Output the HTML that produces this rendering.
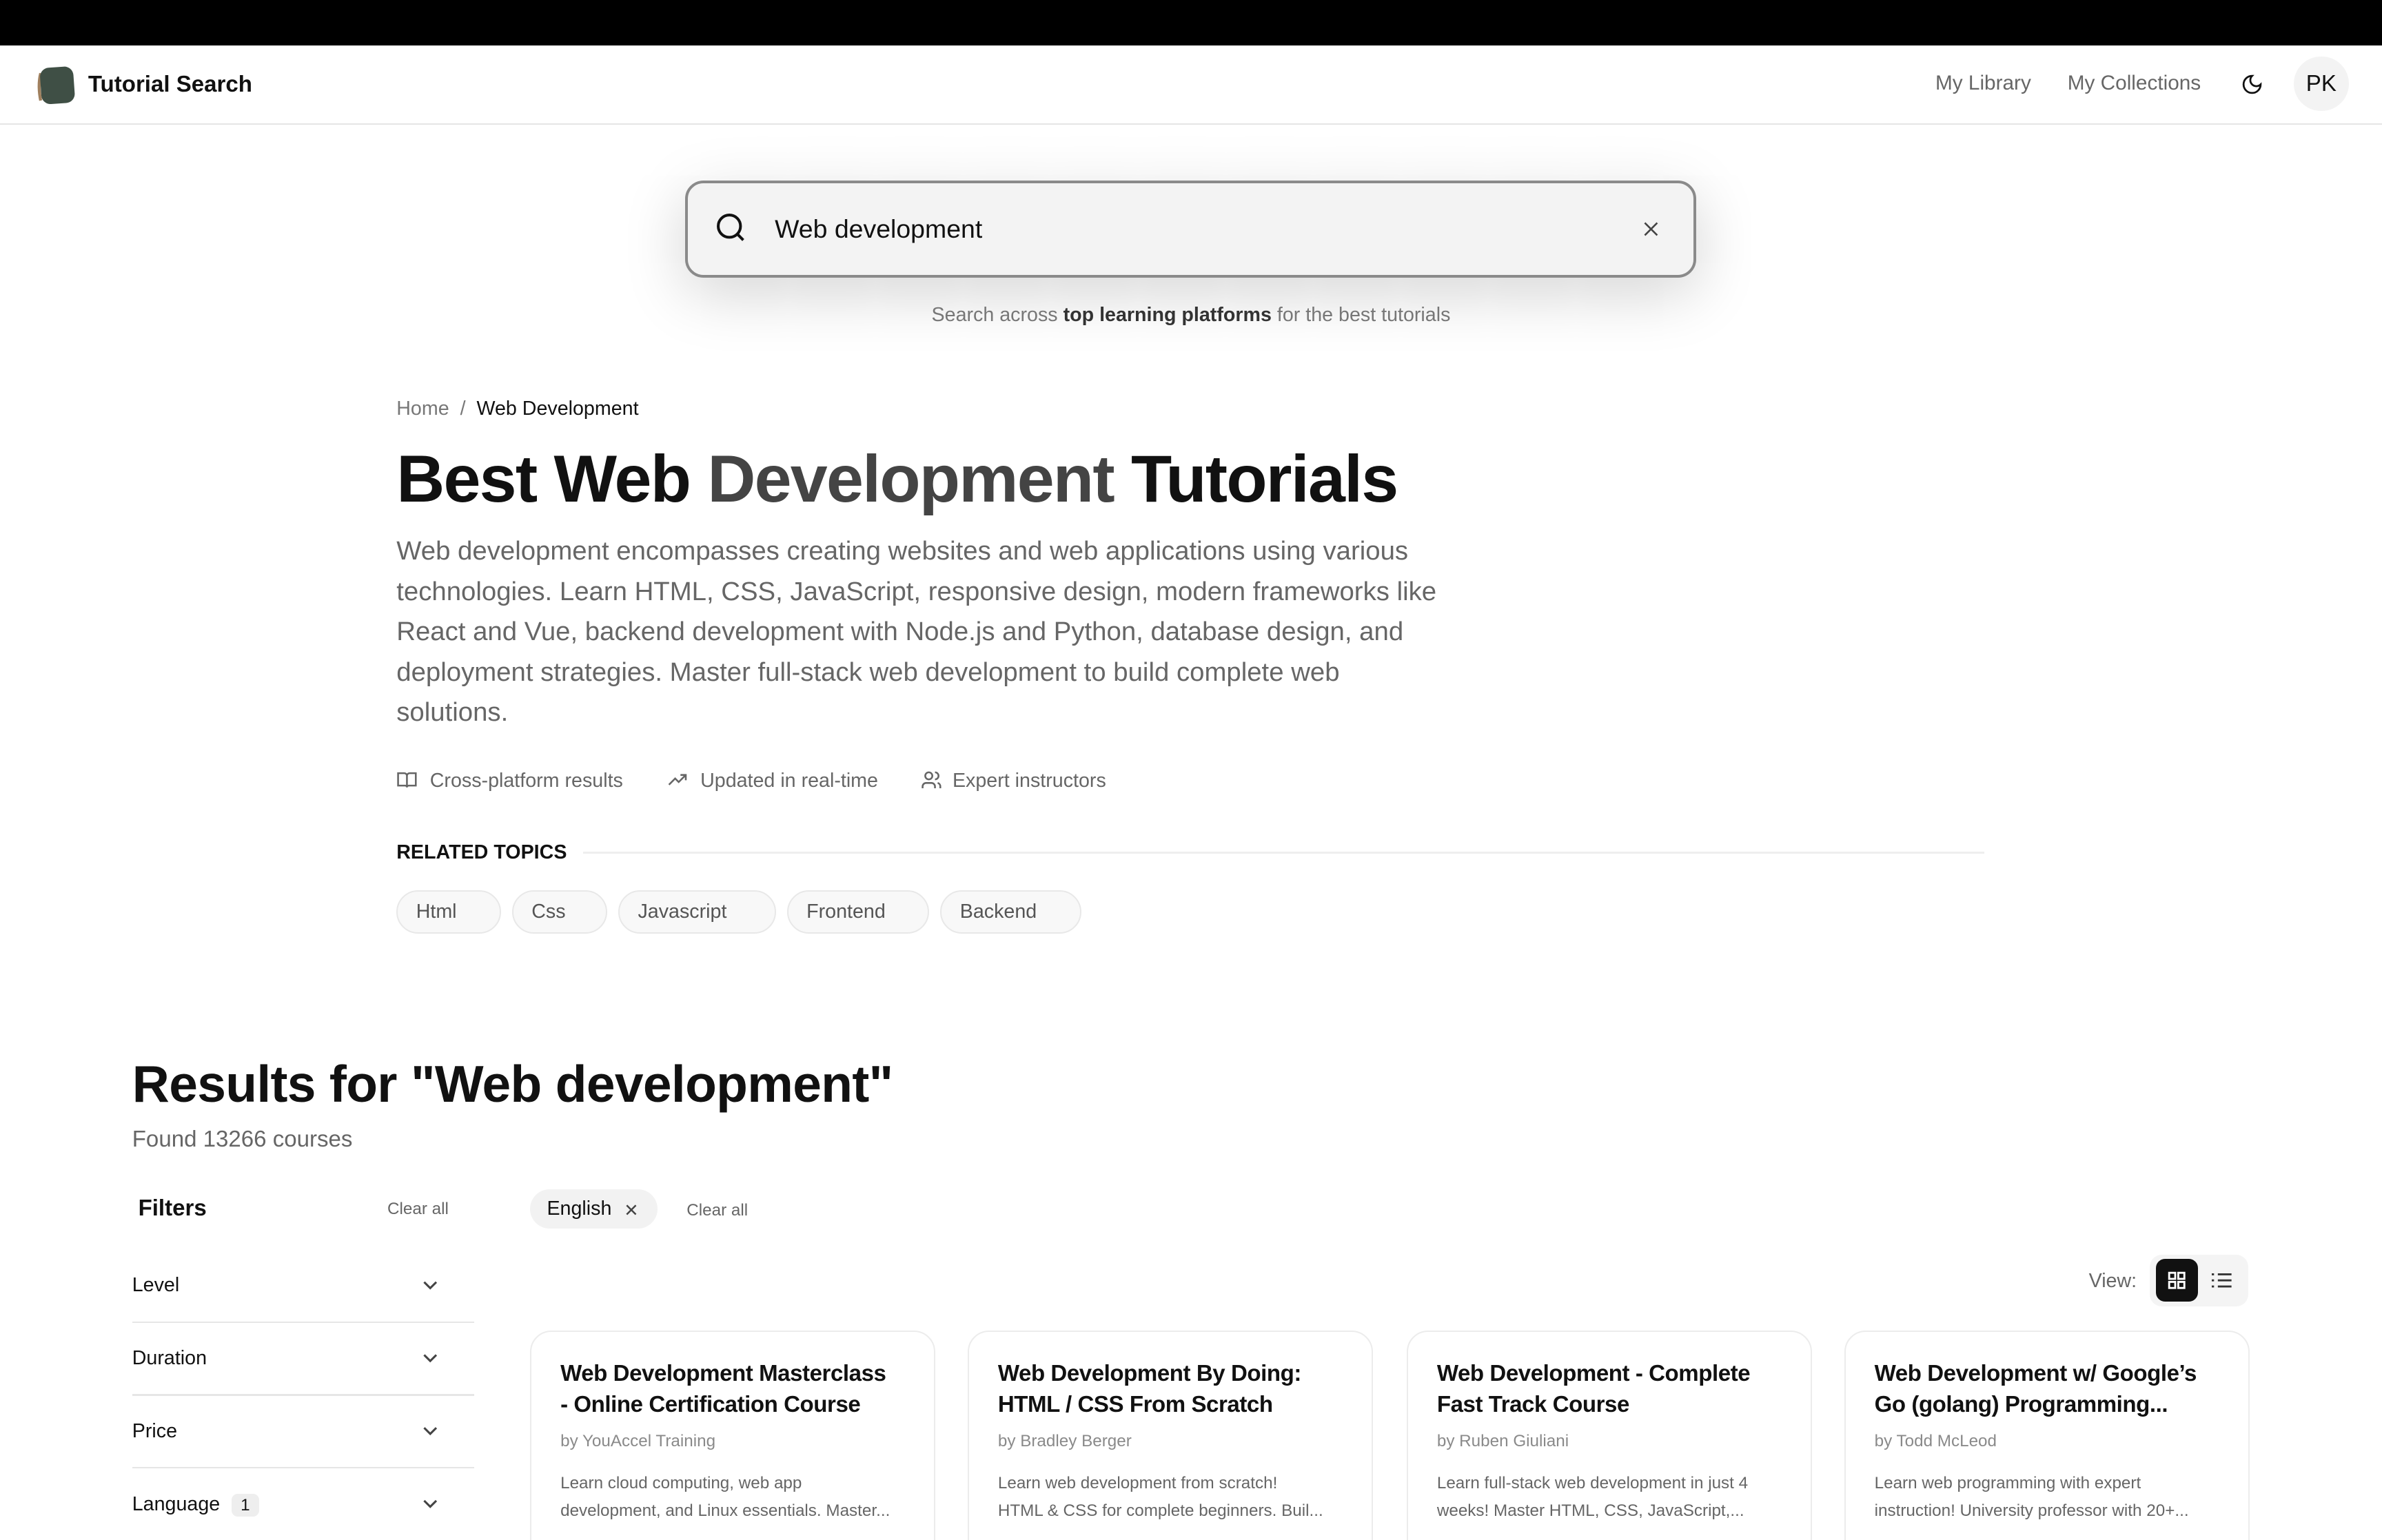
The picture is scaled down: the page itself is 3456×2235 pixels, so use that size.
<!DOCTYPE html>
<html><head><meta charset="utf-8"><style>
html,body{margin:0;padding:0;background:#fff;}
body{width:3456px;height:2234px;overflow:hidden;}
#r{zoom:2.20408;position:relative;width:1568px;height:1014px;overflow:hidden;font-family:"Liberation Sans",sans-serif;color:#111;}
.a{position:absolute;white-space:nowrap;}
.chip{position:absolute;top:586px;height:27px;border:1px solid #e8e8e8;background:#f8f8f8;border-radius:15px;font-size:13px;color:#555;line-height:27px;box-sizing:content-box;}
.chip span{padding-left:12px}
.fr{position:absolute;left:87px;width:225px;font-size:13px;color:#111;}
.line{position:absolute;left:87px;width:225px;height:1px;background:#e6e6e6}
.card{position:absolute;top:876px;width:265px;height:160px;border:1px solid #ececec;border-radius:14px;background:#fff;}
.card .t{position:absolute;left:19px;top:18px;font-size:15px;font-weight:bold;line-height:20px;color:#111;white-space:nowrap;letter-spacing:-0.2px}
.card .b{position:absolute;left:19px;top:66px;font-size:11px;color:#8a8a8a}
.card .d{position:absolute;left:19px;top:91px;font-size:11px;color:#666;line-height:18px;white-space:nowrap}
</style></head><body><div id="r">
<div class="a" style="left:0;top:0;width:1568px;height:30px;background:#000"></div>
<div class="a" style="left:0;top:81px;width:1568px;height:1px;background:#e5e5e5"></div>
<svg class="a" style="left:22px;top:42px" width="30" height="28"><path d="M5 6 Q3 14 5 24" stroke="#a0805e" stroke-width="2" fill="none"/><rect x="5" y="2" width="22" height="24" rx="6" fill="#3f4f45" transform="rotate(-4 16 14)"/></svg>
<div class="a" style="left:58px;top:47px;font-size:15px;font-weight:bold">Tutorial Search</div>
<div class="a" style="left:1274px;top:47px;font-size:13.5px;color:#666">My Library</div>
<div class="a" style="left:1361px;top:47px;font-size:13.5px;color:#666">My Collections</div>
<svg class="a" style="left:1475px;top:48px" width="15" height="15" viewBox="0 0 24 24"><path d="M12 3a6 6 0 0 0 9 9 9 9 0 1 1-9-9Z" fill="none" stroke="#111" stroke-width="2"/></svg>
<div class="a" style="left:1510px;top:37px;width:36px;height:36px;border-radius:18px;background:#f3f3f3;font-size:15px;line-height:36px;text-align:center">PK</div>
<div class="a" style="left:451px;top:119px;width:662px;height:60px;border:2px solid #8a8a8a;border-radius:12px;background:#f3f3f3;box-shadow:0 10px 40px rgba(0,0,0,.18)"></div>
<svg class="a" style="left:470px;top:139px" width="22" height="22" viewBox="0 0 24 24"><circle cx="11" cy="11" r="8" fill="none" stroke="#111" stroke-width="2"/><path d="M21 21l-4.3-4.3" stroke="#111" stroke-width="2"/></svg>
<div class="a" style="left:510px;top:141px;font-size:17px">Web development</div>
<svg class="a" style="left:1080px;top:144px" width="14" height="14" viewBox="0 0 24 24"><path d="M5 5l14 14M19 5L5 19" stroke="#444" stroke-width="2"/></svg>
<div class="a" style="left:0;width:1568px;text-align:center;top:200px;font-size:13px;color:#777">Search across <b style="color:#333">top learning platforms</b> for the best tutorials</div>
<div class="a" style="left:261px;top:262px;font-size:13px;color:#777">Home &nbsp;/&nbsp; <span style="color:#111">Web Development</span></div>
<div class="a" style="left:261px;top:290px;font-size:44px;font-weight:bold;letter-spacing:-0.8px">Best Web <span style="color:#444">Development</span> Tutorials</div>
<div class="a" style="left:261px;top:350px;width:690px;font-size:17.4px;line-height:26.5px;color:#666;white-space:normal">Web development encompasses creating websites and web applications using various technologies. Learn HTML, CSS, JavaScript, responsive design, modern frameworks like React and Vue, backend development with Node.js and Python, database design, and deployment strategies. Master full-stack web development to build complete web solutions.</div>
<svg class="a" style="left:261px;top:507px" width="14" height="14" viewBox="0 0 24 24" fill="none" stroke="#666" stroke-width="2"><path d="M2 4h7a3 3 0 0 1 3 3v13a2 2 0 0 0-2-2H2zM22 4h-7a3 3 0 0 0-3 3v13a2 2 0 0 1 2-2h8z"/></svg>
<div class="a" style="left:283px;top:507px;font-size:13px;color:#666">Cross-platform results</div>
<svg class="a" style="left:439px;top:507px" width="14" height="14" viewBox="0 0 24 24" fill="none" stroke="#666" stroke-width="2"><path d="M2 17l7-7 4 4 8-8M15 6h6v6"/></svg>
<div class="a" style="left:461px;top:507px;font-size:13px;color:#666">Updated in real-time</div>
<svg class="a" style="left:606px;top:507px" width="14" height="14" viewBox="0 0 24 24" fill="none" stroke="#666" stroke-width="2"><circle cx="9" cy="7" r="4"/><path d="M2 21v-2a4 4 0 0 1 4-4h6a4 4 0 0 1 4 4v2M16 3a4 4 0 0 1 0 8M22 21v-2a4 4 0 0 0-3-4"/></svg>
<div class="a" style="left:627px;top:507px;font-size:13px;color:#666">Expert instructors</div>
<div class="a" style="left:261px;top:554px;font-size:13px;font-weight:bold;color:#111">RELATED TOPICS</div>
<div class="a" style="left:384px;top:561px;width:922px;height:1px;background:#eee"></div>
<div class="chip" style="left:261px;width:67px"><span>Html</span></div>
<div class="chip" style="left:337px;width:61px"><span>Css</span></div>
<div class="chip" style="left:407px;width:102px"><span>Javascript</span></div>
<div class="chip" style="left:518px;width:92px"><span>Frontend</span></div>
<div class="chip" style="left:619px;width:91px"><span>Backend</span></div>
<div class="a" style="left:87px;top:694px;font-size:34px;font-weight:bold;letter-spacing:-0.3px">Results for "Web development"</div>
<div class="a" style="left:87px;top:742px;font-size:15px;color:#666">Found 13266 courses</div>
<div class="a" style="left:91px;top:787px;font-size:15px;font-weight:bold">Filters</div>
<div class="a" style="left:255px;top:790px;font-size:11px;color:#666">Clear all</div>
<div class="fr" style="top:839px">Level</div>
<div class="line" style="top:870px"></div>
<div class="fr" style="top:887px">Duration</div>
<div class="line" style="top:918px"></div>
<div class="fr" style="top:935px">Price</div>
<div class="line" style="top:966px"></div>
<div class="fr" style="top:983px">Language <span style="display:inline-block;background:#eee;border-radius:4px;padding:1px 6px;font-size:11px;margin-left:4px">1</span></div>
<svg class="a" style="left:277px;top:841px" width="12" height="160" viewBox="0 0 12 160" fill="none" stroke="#444" stroke-width="1.4"><path d="M2 3l4 4 4-4M2 51l4 4 4-4M2 99l4 4 4-4M2 147l4 4 4-4"/></svg>
<div class="a" style="left:349px;top:783px;width:84px;height:26px;background:#f2f2f2;border-radius:13px;font-size:13px;line-height:26px"><span style="padding-left:11px">English</span></div>
<svg class="a" style="left:411px;top:792px" width="9" height="9" viewBox="0 0 24 24"><path d="M4 4l16 16M20 4L4 20" stroke="#444" stroke-width="3"/></svg>
<div class="a" style="left:452px;top:791px;font-size:11px;color:#666">Clear all</div>
<div class="a" style="left:1375px;top:836px;font-size:13px;color:#666">View:</div>
<div class="a" style="left:1415px;top:826px;width:65px;height:34px;background:#f4f4f4;border-radius:8px"></div>
<div class="a" style="left:1419px;top:829px;width:28px;height:28px;background:#111;border-radius:6px"></div>
<svg class="a" style="left:1427px;top:837px" width="12" height="12" viewBox="0 0 12 12" fill="none" stroke="#fff" stroke-width="1.3"><rect x="1" y="1" width="4" height="4"/><rect x="7" y="1" width="4" height="4"/><rect x="1" y="7" width="4" height="4"/><rect x="7" y="7" width="4" height="4"/></svg>
<svg class="a" style="left:1456px;top:837px" width="13" height="12" viewBox="0 0 13 12" stroke="#333" stroke-width="1.3"><path d="M4 2h9M4 6h9M4 10h9M0 2h1.5M0 6h1.5M0 10h1.5"/></svg>
<div class="card" style="left:349px"><div class="t">Web Development Masterclass<br>- Online Certification Course</div><div class="b">by YouAccel Training</div><div class="d">Learn cloud computing, web app<br>development, and Linux essentials. Master...</div></div>
<div class="card" style="left:637px"><div class="t">Web Development By Doing:<br>HTML / CSS From Scratch</div><div class="b">by Bradley Berger</div><div class="d">Learn web development from scratch!<br>HTML &amp; CSS for complete beginners. Buil...</div></div>
<div class="card" style="left:926px"><div class="t">Web Development - Complete<br>Fast Track Course</div><div class="b">by Ruben Giuliani</div><div class="d">Learn full-stack web development in just 4<br>weeks! Master HTML, CSS, JavaScript,...</div></div>
<div class="card" style="left:1214px"><div class="t">Web Development w/ Google’s<br>Go (golang) Programming...</div><div class="b">by Todd McLeod</div><div class="d">Learn web programming with expert<br>instruction! University professor with 20+...</div></div>
</div></body></html>
